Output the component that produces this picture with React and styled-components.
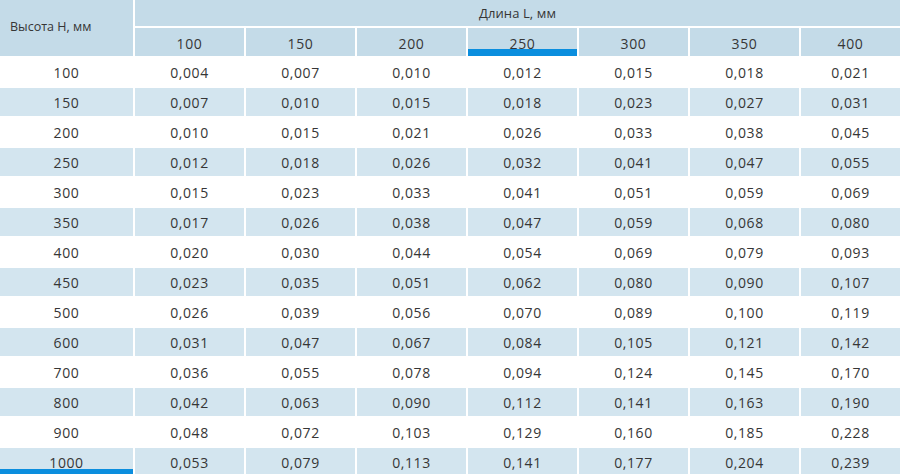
import React from "react";
import { styled, createGlobalStyle } from "styled-components";

const lengths = [100, 150, 200, 250, 300, 350, 400];

const rows = [
  [100, "0,004", "0,007", "0,010", "0,012", "0,015", "0,018", "0,021"],
  [150, "0,007", "0,010", "0,015", "0,018", "0,023", "0,027", "0,031"],
  [200, "0,010", "0,015", "0,021", "0,026", "0,033", "0,038", "0,045"],
  [250, "0,012", "0,018", "0,026", "0,032", "0,041", "0,047", "0,055"],
  [300, "0,015", "0,023", "0,033", "0,041", "0,051", "0,059", "0,069"],
  [350, "0,017", "0,026", "0,038", "0,047", "0,059", "0,068", "0,080"],
  [400, "0,020", "0,030", "0,044", "0,054", "0,069", "0,079", "0,093"],
  [450, "0,023", "0,035", "0,051", "0,062", "0,080", "0,090", "0,107"],
  [500, "0,026", "0,039", "0,056", "0,070", "0,089", "0,100", "0,119"],
  [600, "0,031", "0,047", "0,067", "0,084", "0,105", "0,121", "0,142"],
  [700, "0,036", "0,055", "0,078", "0,094", "0,124", "0,145", "0,170"],
  [800, "0,042", "0,063", "0,090", "0,112", "0,141", "0,163", "0,190"],
  [900, "0,048", "0,072", "0,103", "0,129", "0,160", "0,185", "0,228"],
  [1000, "0,053", "0,079", "0,113", "0,141", "0,177", "0,204", "0,239"],
];

const GlobalStyle = createGlobalStyle`
  html, body {
    margin: 0;
    padding: 0;
    background: #fff;
    overflow: hidden;
  }
  body {
    font-family: "Open Sans", "Liberation Sans", sans-serif;
    color: #363636;
  }
`;

const Table = styled.div`
  display: grid;
  grid-template-columns: 133px repeat(6, 109px) 1fr;
  grid-template-rows: 26px 28px;
  grid-auto-rows: 28px;
  gap: 2px;
  width: 900px;
`;

const Cell = styled.div`
  position: relative;
  display: flex;
  align-items: center;
  justify-content: center;
  font-size: 14px;
  letter-spacing: 0.6px;
  background: ${({ $stripe }) => ($stripe ? "#d3e5ef" : "#fff")};
  overflow: hidden;

  ${({ $marked }) =>
    $marked &&
    `
    &::after {
      content: "";
      position: absolute;
      left: 0;
      right: 0;
      bottom: 0;
      height: 7px;
      background: #0b8ede;
    }
  `}
`;

const HeadCell = styled(Cell)`
  background: #c4dbe8;
  padding-top: 2px;
  box-sizing: border-box;
`;

const CornerCell = styled(HeadCell)`
  grid-row: 1 / span 2;
  justify-content: flex-start;
  padding: 0 0 4px 10px;
  font-size: 12.5px;
  letter-spacing: 0;
`;

const GroupCell = styled(HeadCell)`
  grid-column: 2 / span 7;
  font-size: 13px;
  letter-spacing: 0.1px;
  padding-top: 0;
`;

const App = () => {
  return (
    <>
      <GlobalStyle />
      <Table>
        <CornerCell>Высота H, мм</CornerCell>
        <GroupCell>Длина L, мм</GroupCell>
        {lengths.map((l) => (
          <HeadCell key={l} $marked={l === 250}>
            {l}
          </HeadCell>
        ))}
        {rows.map((row, i) =>
          row.map((value, j) => (
            <Cell
              key={`${i}-${j}`}
              $stripe={i % 2 === 1}
              $marked={j === 0 && i === rows.length - 1}
            >
              {value}
            </Cell>
          ))
        )}
      </Table>
    </>
  );
};

export default App;
